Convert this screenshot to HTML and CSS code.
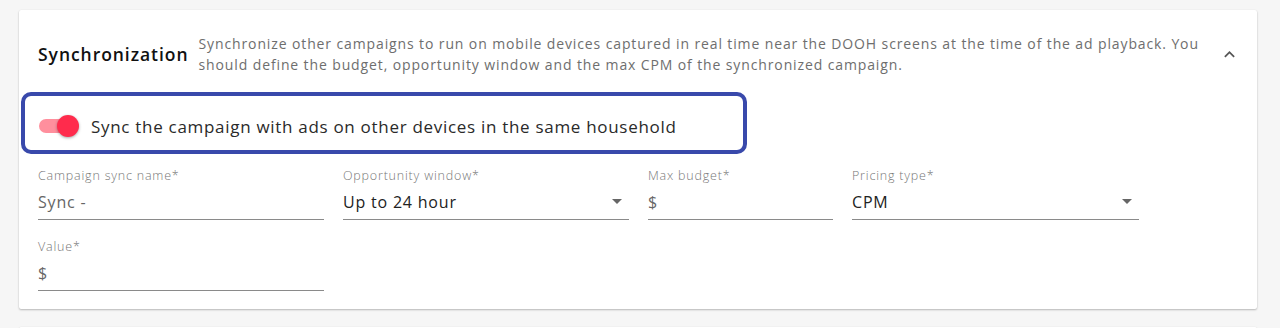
FILE: index.html
```html
<!DOCTYPE html>
<html>
<head>
<meta charset="utf-8">
<link rel="stylesheet" href="styles.css">
</head>
<body>
<div class="page">
  <section class="card">
    <header class="head">
      <h2 class="title">Synchronization</h2>
      <p class="desc">Synchronize other campaigns to run on mobile devices captured in real time near the DOOH screens at the time of the ad playback. You should define the budget, opportunity window and the max CPM of the synchronized campaign.</p>
      <span class="chev">
        <svg width="11" height="7" viewBox="0 0 12 8"><path d="M1.4 7.4 6 2.8l4.6 4.6L12 6 6 0 0 6z" fill="#555"/></svg>
      </span>
    </header>
    <div class="body">
      <div class="highlight">
        <span class="switch"><span class="track"></span><span class="thumb"></span></span>
        <span class="switch-label">Sync the campaign with ads on other devices in the same household</span>
      </div>
      <div class="row">
        <div class="field w286">
          <label class="lbl">Campaign sync name*</label>
          <div class="input"><span class="val muted">Sync -</span></div>
        </div>
        <div class="field w286">
          <label class="lbl">Opportunity window*</label>
          <div class="input"><span class="val">Up to 24 hour</span><span class="caret"></span></div>
        </div>
        <div class="field w185">
          <label class="lbl">Max budget*</label>
          <div class="input"><span class="val muted">$</span></div>
        </div>
        <div class="field w287">
          <label class="lbl">Pricing type*</label>
          <div class="input"><span class="val">CPM</span><span class="caret"></span></div>
        </div>
      </div>
      <div class="row">
        <div class="field w286">
          <label class="lbl">Value*</label>
          <div class="input"><span class="val muted">$</span></div>
        </div>
      </div>
    </div>
  </section>
  <section class="card next"></section>
</div>
</body>
</html>
```
FILE: styles.css
```css
* { box-sizing: border-box; }
html, body { margin: 0; padding: 0; }
html { height: 328px; overflow: hidden; }
body {
  background: #f6f6f6;
  font-family: "Open Sans", "Liberation Sans", sans-serif;
  color: #222;
  height: 328px;
  overflow: hidden;
}
.page { padding: 10px 23px 0 19px; }
.card {
  background: #fff;
  box-shadow: 0 1px 2px rgba(0,0,0,0.25), 0 0 1px rgba(0,0,0,0.08);
  border-radius: 2px;
  padding: 0 0 18px 0;
}
.card.next { margin-top: 18px; height: 10px; padding: 0; }
.head {
  display: flex;
  align-items: center;
  padding: 23px 0 17px 19px;
}
.title {
  margin: 0;
  font-size: 17.5px;
  font-weight: 600;
  letter-spacing: 0.95px;
  color: #111;
  white-space: nowrap;
  margin-right: 10px;
}
.desc {
  margin: 0;
  flex: 0 0 1012px;
  font-size: 14px;
  line-height: 21px;
  letter-spacing: 0.88px;
  color: #6e6e6e;
  font-weight: 400;
}
.chev { margin-left: 13px; display: flex; align-items: center; }
.body { padding: 0 0 0 2px; }
.highlight {
  display: flex;
  align-items: center;
  width: 726px;
  height: 62px;
  border: 4px solid #3949ab;
  border-radius: 10px;
  padding: 6px 0 0 13px;
}
.switch { position: relative; width: 42px; height: 22px; display: inline-block; margin-right: 11px; }
.track {
  position: absolute; left: 1px; top: 4px; width: 34px; height: 14px;
  border-radius: 7px; background: #ff8f9d;
}
.thumb {
  position: absolute; left: 19px; top: 0; width: 22px; height: 22px;
  border-radius: 50%; background: #ff2b4c;
  box-shadow: 0 1px 3px rgba(0,0,0,0.35);
}
.switch-label { font-size: 17px; letter-spacing: 0.7px; color: #2a2a2a; }
.row { display: flex; gap: 19px; padding-left: 17px; margin-top: 14px; }
.row + .row { margin-top: 19px; }
.field { display: flex; flex-direction: column; }
.w286 { width: 286px; }
.w185 { width: 185px; }
.w287 { width: 287px; }
.lbl { font-size: 12.5px; line-height: 16px; letter-spacing: 0.8px; color: #777; font-weight: 300; }
.input {
  display: flex; align-items: center; justify-content: space-between;
  height: 36px; border-bottom: 1px solid #8a8a8a;
}
.val { font-size: 16px; letter-spacing: 0.8px; color: #222; }
.val.muted { color: #666; }
.caret {
  width: 0; height: 0; margin-right: 7px;
  border-left: 5px solid transparent; border-right: 5px solid transparent;
  border-top: 5px solid #666;
}
```
